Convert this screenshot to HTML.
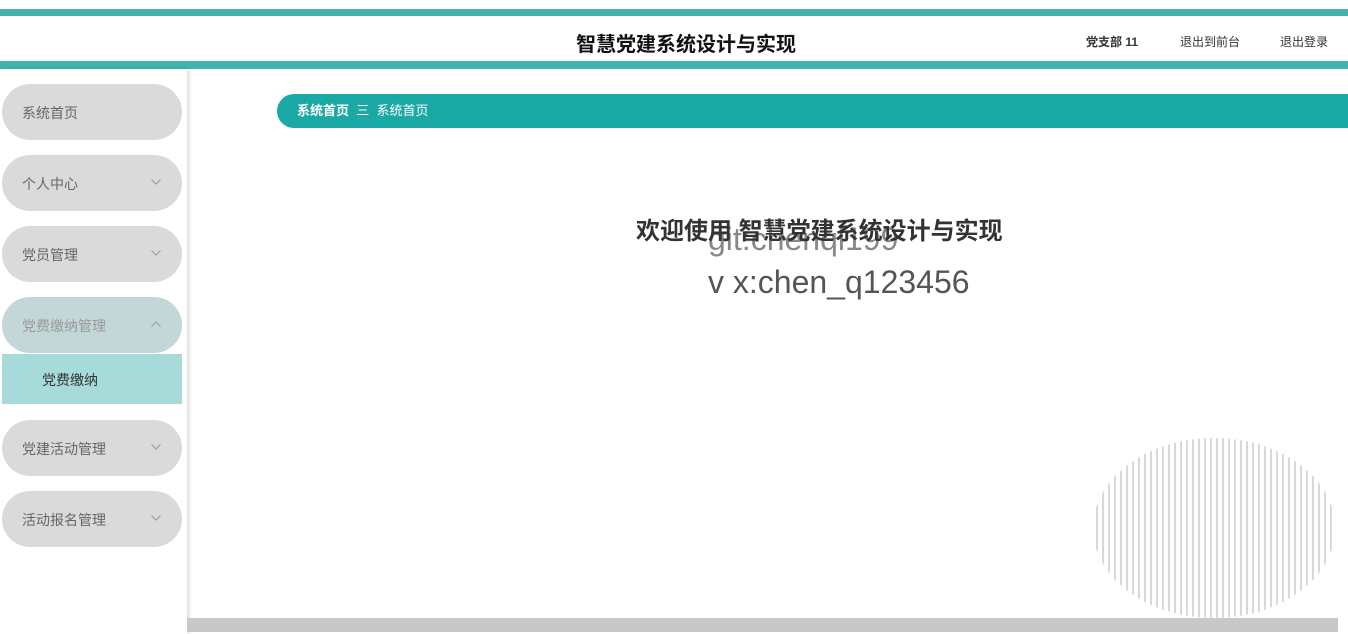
<!DOCTYPE html>
<html><head><meta charset="utf-8"><style>
*{margin:0;padding:0;box-sizing:border-box}
body{width:1348px;height:634px;overflow:hidden;background:#fff;font-family:"Liberation Sans","Noto Sans CJK SC",sans-serif;position:relative}
.bar1{position:absolute;left:0;top:9px;width:1348px;height:7px;background:#43b3ad}
.bar2{position:absolute;left:0;top:61px;width:1348px;height:8px;background:#43b3ad}
.title{position:absolute;left:0;width:1372px;top:28px;text-align:center;font-size:20px;font-weight:bold;color:#111}
.tr{position:absolute;top:33px;font-size:12px;color:#333}
.side{position:absolute;left:0;top:69px;width:187px;height:565px;background:#fff;box-shadow:2px 0 4px rgba(0,0,0,.15)}
.item{position:absolute;left:2px;width:180px;height:56px;border-radius:28px;background:#dadada;color:#666;font-size:14px;line-height:58px;padding-left:20px}
.item svg{position:absolute;right:21px;top:24px}
.sub{position:absolute;left:2px;top:354px;width:180px;height:50px;background:#a6dbd9;color:#333;font-size:14px;line-height:52px;padding-left:40px}
.crumb{position:absolute;left:277px;top:94px;width:1080px;height:34px;border-radius:17px 0 0 17px;background:#1ba9a5;color:#fff;font-size:13px;line-height:34px;padding-left:20px}
.welcome{position:absolute;left:636px;top:211px;font-size:24px;font-weight:bold;color:#333}
.wm{position:absolute;left:708px;font-size:32px;color:#555;font-family:"Liberation Sans",sans-serif}
.scroll{position:absolute;left:187px;top:618px;width:1151px;height:14px;background:#c8c8c8}
</style></head><body>
<div class="bar1"></div>
<div class="title">智慧党建系统设计与实现</div>
<div class="tr" style="left:1086px;font-weight:bold">党支部 11</div>
<div class="tr" style="left:1180px">退出到前台</div>
<div class="tr" style="left:1280px">退出登录</div>
<div class="bar2"></div>
<div class="side"></div>
<div class="item" style="top:84px">系统首页</div>
<div class="item" style="top:155px">个人中心<svg width="10" height="6"><path d="M0.5 0.5L5 5L9.5 0.5" fill="none" stroke="#999"/></svg></div>
<div class="item" style="top:226px">党员管理<svg width="10" height="6"><path d="M0.5 0.5L5 5L9.5 0.5" fill="none" stroke="#999"/></svg></div>
<div class="item" style="top:297px;background:#c3d7d8;color:#999">党费缴纳管理<svg width="10" height="6"><path d="M0.5 5.5L5 1L9.5 5.5" fill="none" stroke="#999"/></svg></div>
<div class="sub">党费缴纳</div>
<div class="item" style="top:420px">党建活动管理<svg width="10" height="6"><path d="M0.5 0.5L5 5L9.5 0.5" fill="none" stroke="#999"/></svg></div>
<div class="item" style="top:491px">活动报名管理<svg width="10" height="6"><path d="M0.5 0.5L5 5L9.5 0.5" fill="none" stroke="#999"/></svg></div>
<div class="crumb"><b>系统首页</b>&nbsp;&nbsp;三&nbsp;&nbsp;系统首页</div>
<div class="wm" style="top:221px;color:#888">git:chenqi199</div>
<div class="welcome">欢迎使用 智慧党建系统设计与实现</div>
<div class="wm" style="top:264px">v x:chen_q123456</div>
<svg style="position:absolute;left:1090px;top:436px" width="250" height="184">
<defs><clipPath id="c"><ellipse cx="124" cy="92" rx="121" ry="90"/></clipPath>
<pattern id="p" width="6" height="10" patternUnits="userSpaceOnUse"><rect x="0" y="0" width="2" height="10" fill="#d8d8d8"/></pattern></defs>
<rect width="250" height="184" fill="url(#p)" clip-path="url(#c)"/>
</svg>
<div class="scroll"></div>
</body></html>
